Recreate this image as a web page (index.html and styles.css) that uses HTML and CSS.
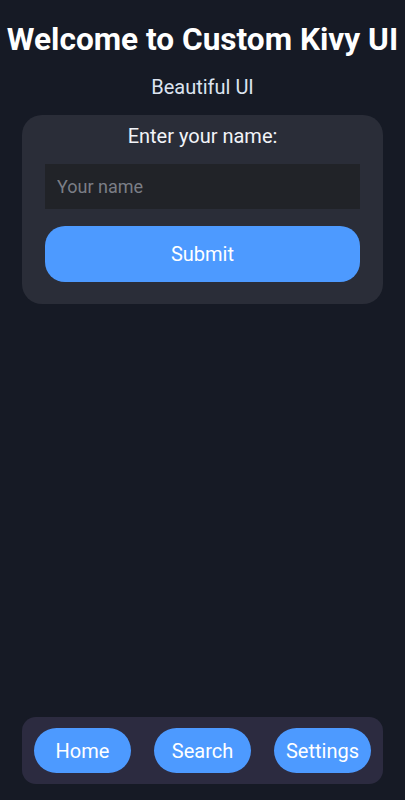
FILE: index.html
```html
<!DOCTYPE html>
<html lang="en">
<head>
    <meta charset="UTF-8">
    <meta name="viewport" content="width=device-width, initial-scale=1.0">
    <title>Custom Kivy UI</title>
    <link rel="stylesheet" href="styles.css">
</head>
<body>
    <div class="screen">
        <h1 class="title">Welcome to Custom Kivy UI</h1>
        <p class="subtitle">Beautiful UI</p>

        <div class="card">
            <label class="card-label" for="name">Enter your name:</label>
            <input class="name-input" type="text" id="name" name="name" placeholder="Your name">
            <button class="submit-btn" type="button">Submit</button>
        </div>

        <div class="spacer"></div>

        <nav class="nav-bar">
            <button class="nav-btn" type="button">Home</button>
            <button class="nav-btn" type="button">Search</button>
            <button class="nav-btn" type="button">Settings</button>
        </nav>
    </div>
</body>
</html>
```

FILE: styles.css
```css
body {
    margin: 0;
    padding: 0;
    background-color: #161a25;
    font-family: Roboto, "Noto Sans", sans-serif;
    color: #fff;
}
.screen {
    height: 800px;
    display: flex;
    flex-direction: column;
    box-sizing: border-box;
    padding: 0 22px 16px;
}
.title {
    margin: 20px -22px 0;
    text-align: center;
    font-size: 31.6px;
    font-weight: bold;
    line-height: 40px;
    color: #fff;
    white-space: nowrap;
}
.subtitle {
    margin: 15px 0 0;
    text-align: center;
    font-size: 20px;
    line-height: 24px;
    color: #dce3f0;
}
.card {
    margin-top: 16px;
    padding: 9px 23px 22px;
    background-color: #2a2d38;
    border-radius: 20px;
    display: flex;
    flex-direction: column;
}
.card-label {
    text-align: center;
    font-size: 20px;
    line-height: 24px;
    color: #f2f4f8;
}
.name-input {
    margin-top: 16px;
    height: 45px;
    padding: 0 12px;
    border: none;
    background-color: #212328;
    color: #fff;
    font-family: Roboto, sans-serif;
    font-size: 18px;
    box-sizing: border-box;
    outline: none;
}
.name-input::placeholder {
    color: #7b7e86;
}
.submit-btn {
    margin-top: 17px;
    height: 56px;
    border: none;
    border-radius: 20px;
    background-color: #4d9aff;
    color: #fff;
    font-family: Roboto, sans-serif;
    font-size: 20px;
    cursor: pointer;
}
.spacer {
    flex: 1;
}
.nav-bar {
    display: flex;
    gap: 23px;
    padding: 11px 12px;
    background-color: #2c2b40;
    border-radius: 14px;
}
.nav-btn {
    flex: 1;
    height: 45px;
    border: none;
    border-radius: 23px;
    background-color: #4d9aff;
    color: #fff;
    font-family: Roboto, sans-serif;
    font-size: 20px;
    cursor: pointer;
}
```
